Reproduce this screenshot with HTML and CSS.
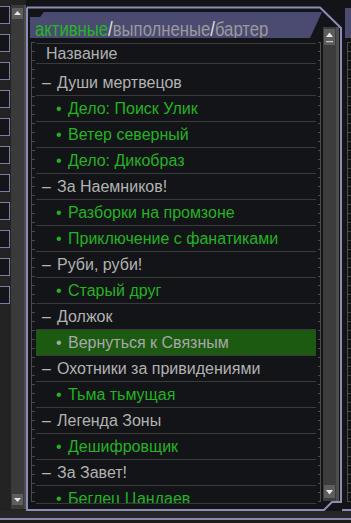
FILE: index.html
```html
<!DOCTYPE html>
<html lang="ru">
<head>
    <meta charset="UTF-8">
    <meta name="viewport" content="width=device-width, initial-scale=1.0">
    <title>Задания</title>
    <link rel="stylesheet" href="styles.css">
</head>
<body>
    <div class="desk">
        <!-- left neighbour: slots and its scrollbar -->
        <div class="slots">
            <span class="slot"></span><span class="slot"></span><span class="slot"></span>
            <span class="slot"></span><span class="slot"></span><span class="slot"></span>
            <span class="slot"></span><span class="slot"></span><span class="slot"></span>
            <span class="slot"></span><span class="slot"></span>
        </div>
        <div class="rail">
            <span class="btn">
                <svg width="11" height="11" viewBox="0 0 11 11"><path d="M2 7 L5.5 3 L9 7 Z" fill="#e6e6e6"/></svg>
            </span>
            <span class="btn">
                <svg width="11" height="11" viewBox="0 0 11 11"><path d="M2 4 L9 4 L5.5 8 Z" fill="#e6e6e6"/></svg>
            </span>
        </div>

        <!-- task journal -->
        <div class="panel">
            <svg class="frame" width="316" height="511" viewBox="0 0 316 511">
                <polyline points="1,7.5 294,7.5 315,28 315,502 306,502 298,510 1,510 1,7.5" fill="none" stroke="#8c8cb6" stroke-width="2"/>
            </svg>
            <div class="main">
                <div class="tab">
                    <span class="tab-text"><span class="on">активные</span><span class="sep">/</span>выполненые<span class="sep">/</span>бартер</span>
                </div>
                <div class="body">
                    <div class="ruler left"></div>
                    <ul class="list">
                        <li class="head">Название</li>
                        <li class="group"><span class="mark">–</span>Души мертвецов</li>
                        <li class="task"><span class="mark">•</span>Дело: Поиск Улик</li>
                        <li class="task"><span class="mark">•</span>Ветер северный</li>
                        <li class="task"><span class="mark">•</span>Дело: Дикобраз</li>
                        <li class="group"><span class="mark">–</span>За Наемников!</li>
                        <li class="task"><span class="mark">•</span>Разборки на промзоне</li>
                        <li class="task"><span class="mark">•</span>Приключение с фанатиками</li>
                        <li class="group"><span class="mark">–</span>Руби, руби!</li>
                        <li class="task"><span class="mark">•</span>Старый друг</li>
                        <li class="group"><span class="mark">–</span>Должок</li>
                        <li class="task selected"><span class="mark">•</span>Вернуться к Связным</li>
                        <li class="group"><span class="mark">–</span>Охотники за привидениями</li>
                        <li class="task"><span class="mark">•</span>Тьма тьмущая</li>
                        <li class="group"><span class="mark">–</span>Легенда Зоны</li>
                        <li class="task"><span class="mark">•</span>Дешифровщик</li>
                        <li class="group"><span class="mark">–</span>За Завет!</li>
                        <li class="task"><span class="mark">•</span>Беглец Цандаев</li>
                    </ul>
                    <div class="ruler right"></div>
                </div>
            </div>
            <div class="scroll">
                <span class="btn top">
                    <svg width="11" height="16" viewBox="0 0 11 16"><path d="M2 8 L5.5 3.5 L9 8 Z" fill="#e6e6e6"/><rect x="2" y="12" width="7" height="1.2" fill="#c8c8c8"/></svg>
                </span>
                <span class="btn bottom">
                    <svg width="11" height="13" viewBox="0 0 11 13"><path d="M2 5 L9 5 L5.5 9.5 Z" fill="#e6e6e6"/></svg>
                </span>
            </div>
        </div>

        <!-- right neighbour -->
        <div class="next">
            <div class="next-tab"></div>
            <div class="ruler"></div>
        </div>
    </div>
    <div class="base"></div>
</body>
</html>
```

FILE: styles.css
```css
/* Page */
html {
    background-color: #1c1c1c;
}

body {
    margin: 0;
    width: 351px;
    height: 523px;
    overflow: hidden;
    background-color: #1c1c1c;
    font-family: "Liberation Sans", Arial, sans-serif;
}

.desk {
    display: flex;
    height: 511px;
    background-color: #232323;
}

/* Left neighbour */
.slots {
    width: 10px;
    display: flex;
    flex-direction: column;
    gap: 10px;
    padding-top: 6px;
}

.slot {
    height: 18px;
    box-sizing: border-box;
    border: 1px solid #7c7ca4;
    border-left: 0;
    background-color: #141519;
}

.rail {
    width: 11px;
    margin: 5px 0 2px 1px;
    padding: 3px 1px 4px;
    background-color: #3a3a3a;
    border-right: 2px solid #4c4c4c;
    display: flex;
    flex-direction: column;
    justify-content: space-between;
}

.btn {
    display: block;
    background-color: #5d5d5d;
    line-height: 0;
}

/* Journal panel */
.panel {
    position: relative;
    width: 316px;
    display: flex;
    background-color: #131417;
}

.frame {
    position: absolute;
    top: 0;
    left: 0;
    pointer-events: none;
}

.main {
    width: 295px;
    margin-left: 2px;
    padding-top: 12px;
    display: flex;
    flex-direction: column;
}

.tab {
    height: 26px;
    margin: 0 1px 0 2px;
    padding-left: 5px;
    box-sizing: border-box;
    background-color: #4b4b71;
    clip-path: polygon(0 5px, 10px 5px, 14px 0, 100% 0, calc(100% - 12px) 100%, 0 100%);
    color: #9a9a9a;
    white-space: nowrap;
}

/* the game font is taller than Arial, stretch it a bit */
.tab-text {
    display: inline-block;
    margin-top: 9px;
    font-size: 16.7px;
    line-height: 19px;
    transform: scaleY(1.25);
    transform-origin: 0 15px;
}

.tab .on {
    color: #25b525;
}

.tab .sep {
    color: #e4e4e4;
}

.body {
    display: flex;
    height: 466px;
}

.ruler {
    margin-top: 4px;
    height: 460px;
    background:
        linear-gradient(#4a4a4a, #4a4a4a) 0 0 / 1px 100% no-repeat,
        repeating-linear-gradient(to bottom, #4a4a4a 0 1px, transparent 1px 9px);
}

.ruler.left {
    width: 4px;
    margin-left: 3px;
    margin-right: 1px;
}

.ruler.right {
    width: 3px;
    margin-left: 2px;
    background:
        linear-gradient(#4a4a4a, #4a4a4a) 100% 0 / 1px 100% no-repeat,
        repeating-linear-gradient(to bottom, #4a4a4a 0 1px, transparent 1px 9px);
}

.list {
    width: 280px;
    height: 466px;
    margin: 0;
    padding: 5px 0 0;
    box-sizing: border-box;
    list-style: none;
    overflow: hidden;
    border-bottom: 1px solid #3a3a3a;
    font-size: 16px;
}

.list li {
    height: 26px;
    box-sizing: border-box;
    border-bottom: 1px solid #3a3a3a;
    line-height: 25px;
    white-space: nowrap;
}

.list .head {
    height: 21px;
    margin-bottom: 6px;
    padding-left: 10px;
    border-top: 1px solid #3a3a3a;
    line-height: 19px;
    color: #b0b0b0;
}

.list .group {
    padding-left: 6px;
    color: #b2b2b2;
}

.list .task {
    padding-left: 20px;
    color: #21b321;
}

.mark {
    display: inline-block;
    width: 15px;
}

.task .mark {
    width: 12px;
}

.list .selected {
    background-color: #1c5a12;
    color: #a8a8a8;
}

/* Journal scrollbar */
.scroll {
    width: 13px;
    height: 474px;
    margin-top: 27px;
    background-color: #3c3c3c;
    border-right: 3px solid #4e4e4e;
    display: flex;
    flex-direction: column;
    justify-content: space-between;
}

.scroll .btn {
    margin-left: 1px;
    width: 11px;
}

.scroll .top {
    margin-top: 2px;
}

.scroll .bottom {
    margin-bottom: 3px;
}

/* Right neighbour */
.next {
    flex: 1;
    border-bottom: 2px solid #8c8cb6;
    box-sizing: border-box;
    height: 511px;
    background-color: #131417;
}

.next-tab {
    height: 30px;
    margin: 8px 0 0 3px;
    background-color: #4b4b71;
}

.next .ruler {
    width: 3px;
    margin-left: 5px;
}

/* Bottom strip */
.base {
    height: 7px;
    background-color: #262626;
    border-bottom: 2px solid #8888b0;
}
```
